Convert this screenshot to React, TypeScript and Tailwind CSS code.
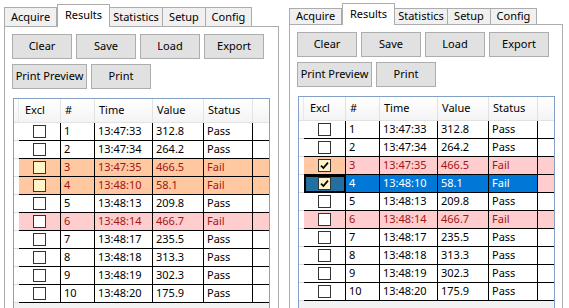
import React from 'react';

type Row = { n: number; time: string; value: string; status: string };

const rows: Row[] = [
  { n: 1, time: '13:47:33', value: '312.8', status: 'Pass' },
  { n: 2, time: '13:47:34', value: '264.2', status: 'Pass' },
  { n: 3, time: '13:47:35', value: '466.5', status: 'Fail' },
  { n: 4, time: '13:48:10', value: '58.1', status: 'Fail' },
  { n: 5, time: '13:48:13', value: '209.8', status: 'Pass' },
  { n: 6, time: '13:48:14', value: '466.7', status: 'Fail' },
  { n: 7, time: '13:48:17', value: '235.5', status: 'Pass' },
  { n: 8, time: '13:48:18', value: '313.3', status: 'Pass' },
  { n: 9, time: '13:48:19', value: '302.3', status: 'Pass' },
  { n: 10, time: '13:48:20', value: '175.9', status: 'Pass' },
];

// how one row is painted
type RowLook = {
  cells: string; // bg + text colour of normal cells
  excl: string; // bg of the Excl cell
  filler: string; // bg of the empty area right of Status
  box: string; // checkbox bg
  checked: boolean;
  focus?: boolean;
};

const plain: RowLook = { cells: 'bg-white text-black', excl: 'bg-white', filler: 'bg-white', box: 'bg-white', checked: false };

const leftLook = (n: number): RowLook => {
  if (n === 3 || n === 4)
    return { cells: 'bg-[#ffc8a0] text-[#a31515]', excl: 'bg-[#ffc8a0]', filler: 'bg-[#ffc8a0]', box: 'bg-[#fdf4c9]', checked: false };
  if (n === 6)
    return { cells: 'bg-[#ffcdcd] text-[#a31515]', excl: 'bg-[#ffcdcd]', filler: 'bg-[#ffcdcd]', box: 'bg-white', checked: false };
  return plain;
};

const rightLook = (n: number): RowLook => {
  if (n === 3)
    return { cells: 'bg-[#ffcdcd] text-[#a31515]', excl: 'bg-[#ffc8a0]', filler: 'bg-[#ffcdcd]', box: 'bg-[#fdf4c9]', checked: true };
  if (n === 4)
    return { cells: 'bg-[#0078d7] text-white', excl: 'bg-[#22709f]', filler: 'bg-[#ffcdcd]', box: 'bg-[#fdf4c9]', checked: true, focus: true };
  if (n === 6)
    return { cells: 'bg-[#ffcdcd] text-[#a31515]', excl: 'bg-[#ffcdcd]', filler: 'bg-[#ffcdcd]', box: 'bg-white', checked: false };
  return plain;
};

const CheckBox: React.FC<{ bg: string; checked: boolean }> = ({ bg, checked }) => (
  <div className={`w-[13px] h-[13px] border border-[#333333] flex items-center justify-center ${bg}`}>
    {checked && (
      <svg width="9" height="9" viewBox="0 0 9 9">
        <path d="M1 4.6 L3.4 7 L8 1.6" stroke="#000" strokeWidth="1.7" fill="none" />
      </svg>
    )}
  </div>
);

const Btn: React.FC<{ label: string; wide?: boolean }> = ({ label, wide }) => (
  <div
    className={`${wide ? 'w-[75px]' : 'w-[60px]'} h-[25px] border border-[#adadad] bg-[#e1e1e1] flex items-center justify-center text-[11px] text-black`}
  >
    {label}
  </div>
);

const tabs = [
  { label: 'Acquire', w: 'w-[53px]' },
  { label: 'Results', w: 'w-[53px]' },
  { label: 'Statistics', w: 'w-[54px]' },
  { label: 'Setup', w: 'w-[44px]' },
  { label: 'Config', w: 'w-[47px]' },
];

const Grid: React.FC<{ look: (n: number) => RowLook }> = ({ look }) => (
  <div className="w-[257px] h-[220px] border border-[#84a0c4] bg-[#f2f2f2] text-[11px]">
    {/* header */}
    <div className="flex h-[24px] bg-linear-to-b from-white to-[#f4f4f4] border-b border-[#e2e2e2]">
      <div className="w-[5px] border-r border-[#e8e8e8]" />
      <div className="w-[42px] border-r border-[#e2e2e2] flex items-center pl-[6px]">Excl</div>
      <div className="w-[34px] border-r border-[#e2e2e2] flex items-center pl-[4px]">#</div>
      <div className="w-[58px] border-r border-[#e2e2e2] flex items-center pl-[4px]">Time</div>
      <div className="w-[51px] border-r border-[#e2e2e2] flex items-center pl-[4px]">Value</div>
      <div className="w-[49px] border-r border-[#e2e2e2] flex items-center pl-[4px]">Status</div>
      <div className="flex-1" />
    </div>
    {rows.map((r) => {
      const l = look(r.n);
      return (
        <div key={r.n} className="flex h-[18px]">
          <div className="w-[5px] bg-white border-b border-[#dadada]" />
          <div
            className={`w-[42px] border-b border-r border-black flex items-center justify-center ${l.excl} ${
              l.focus ? 'outline-2 outline-black -outline-offset-2' : ''
            }`}
          >
            <CheckBox bg={l.box} checked={l.checked} />
          </div>
          <div className={`w-[34px] border-b border-r border-black flex items-center pl-[3px] ${l.cells}`}>{r.n}</div>
          <div className={`w-[58px] border-b border-r border-black flex items-center pl-[3px] ${l.cells}`}>{r.time}</div>
          <div className={`w-[51px] border-b border-r border-black flex items-center pl-[3px] ${l.cells}`}>{r.value}</div>
          <div className={`w-[49px] border-b border-r border-black flex items-center pl-[3px] ${l.cells}`}>{r.status}</div>
          <div className={`flex-1 border-b border-black ${l.filler}`} />
        </div>
      );
    })}
  </div>
);

type PanelProps = {
  outer: string;
  strip: string;
  sel: string;
  unsel: string;
  look: (n: number) => RowLook;
};

const Panel: React.FC<PanelProps> = ({ outer, strip, sel, unsel, look }) => (
  <div className={`flex flex-col ${outer}`}>
    <div className={`flex items-end ${strip}`}>
      {tabs.map((t, i) =>
        i === 1 ? (
          <div
            key={t.label}
            className={`${t.w} ${sel} relative z-10 -mb-px bg-white border border-b-0 border-[#acacac] flex items-start justify-center pt-[2px] text-[11px]`}
          >
            {t.label}
          </div>
        ) : (
          <div
            key={t.label}
            className={`${t.w} ${unsel} bg-[#f0f0f0] border border-b-0 border-[#acacac] -ml-px first:ml-0 flex items-center justify-center text-[11px]`}
          >
            {t.label}
          </div>
        )
      )}
    </div>
    <div className="h-[300px] border border-[#acacac] bg-white pt-[7px] pl-[7px]">
      <div className="flex gap-[4px]">
        <Btn label="Clear" />
        <Btn label="Save" />
        <Btn label="Load" />
        <Btn label="Export" />
      </div>
      <div className="flex gap-[4px] mt-[5px]">
        <Btn label="Print Preview" wide />
        <Btn label="Print" />
      </div>
      <div className="mt-[9px] ml-[1px]">
        <Grid look={look} />
      </div>
    </div>
  </div>
);

const App: React.FC = () => {
  return (
    <div className="w-[569px] h-[308px] overflow-hidden bg-white flex text-black font-['Noto_Sans',sans-serif]">
      <Panel
        outer="ml-[4px] mt-[4px] w-[275px]"
        strip="h-[22px]"
        sel="h-[23px]"
        unsel="h-[19px]"
        look={leftLook}
      />
      <Panel
        outer="ml-[10px] mt-[3px] w-[274px]"
        strip="h-[21px]"
        sel="h-[22px]"
        unsel="h-[16px]"
        look={rightLook}
      />
    </div>
  );
};

export default App;
